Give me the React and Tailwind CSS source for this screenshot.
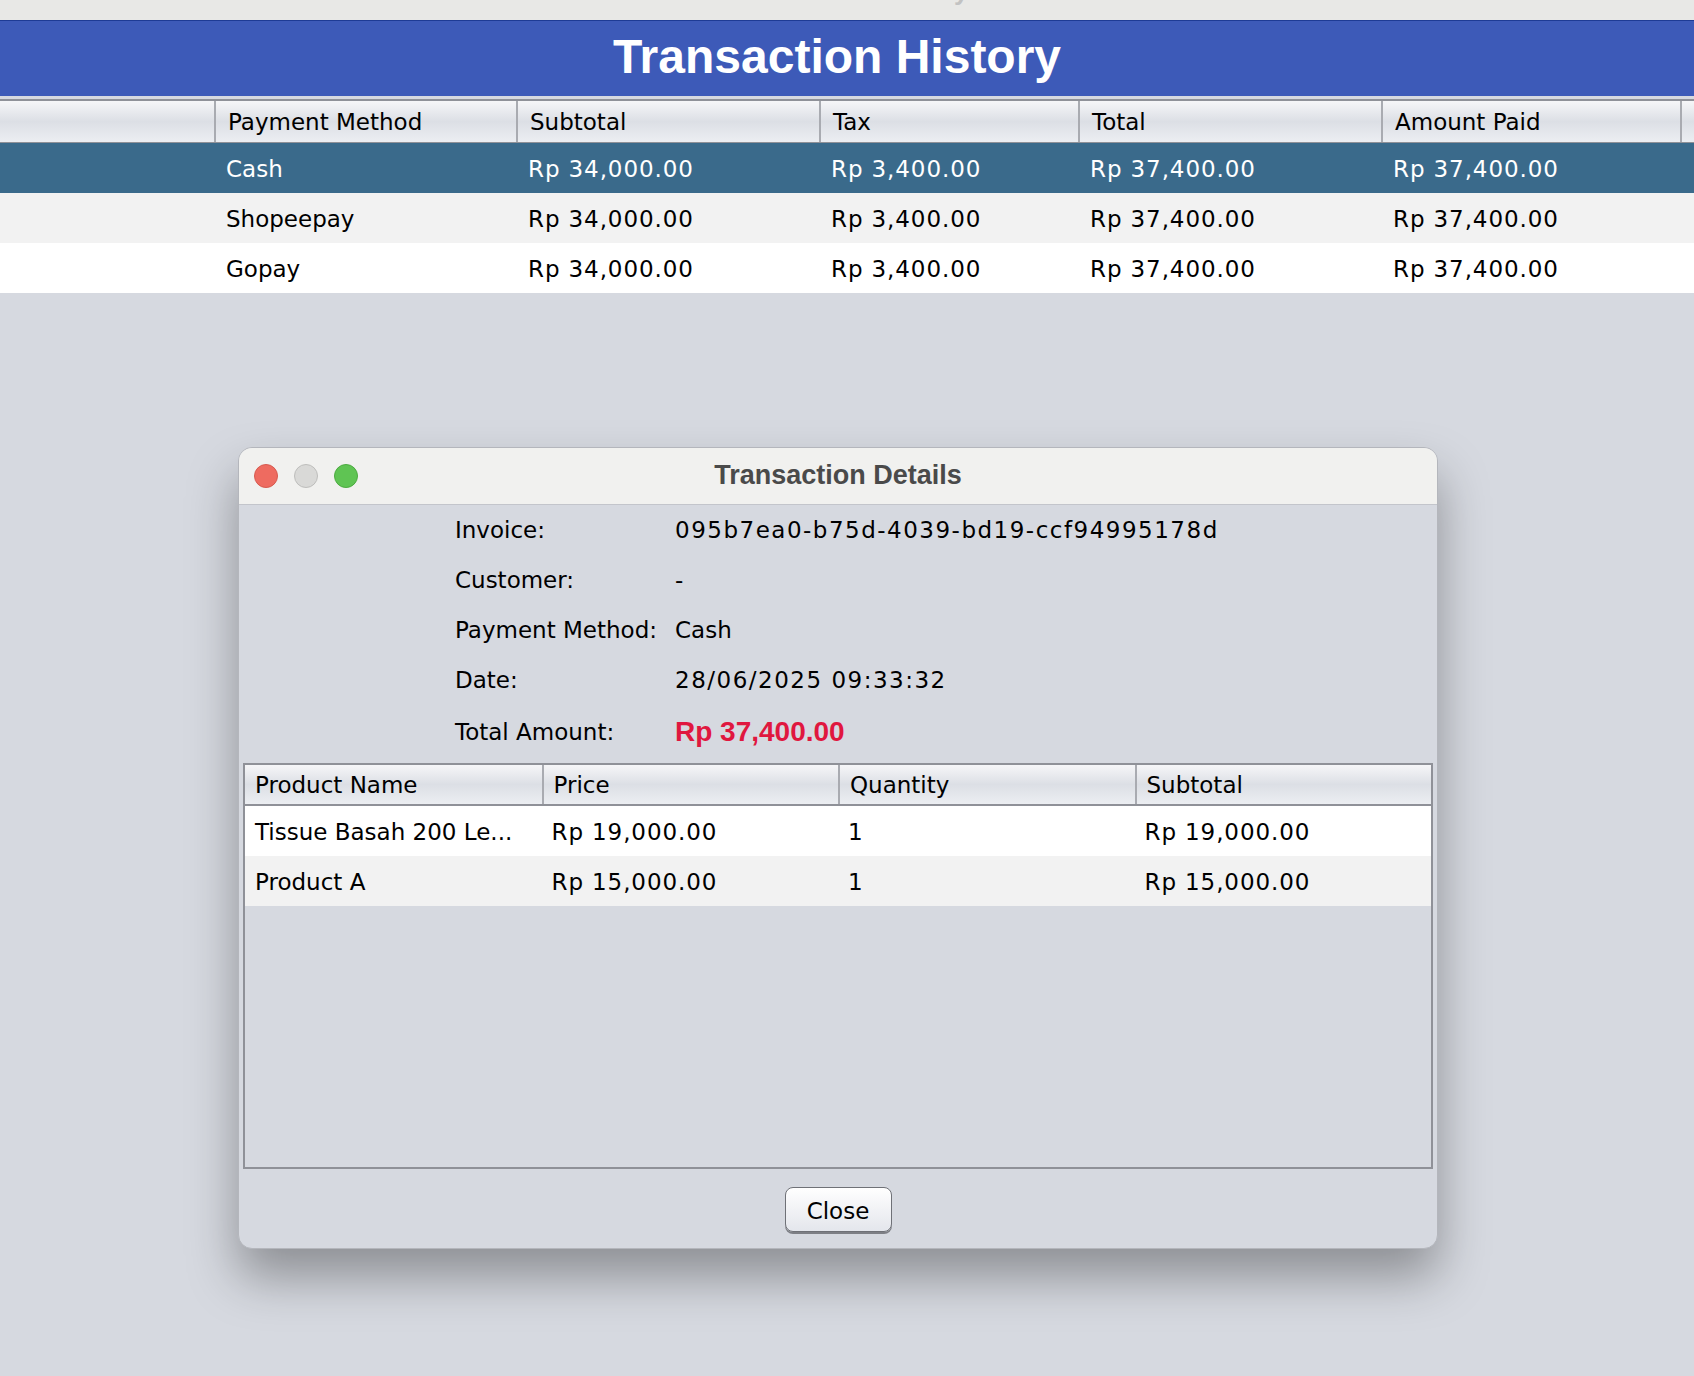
const topCols = ["", "Payment Method", "Subtotal", "Tax", "Total", "Amount Paid", "Change"];

const topRows = [
  ["", "Cash", "Rp 34,000.00", "Rp 3,400.00", "Rp 37,400.00", "Rp 37,400.00", ""],
  ["", "Shopeepay", "Rp 34,000.00", "Rp 3,400.00", "Rp 37,400.00", "Rp 37,400.00", ""],
  ["", "Gopay", "Rp 34,000.00", "Rp 3,400.00", "Rp 37,400.00", "Rp 37,400.00", ""],
];

const rowBg = ["bg-[#3a6a8b] text-white", "bg-[#f2f2f2] text-black", "bg-white text-black"];

const items = [
  ["Tissue Basah 200 Le...", "Rp 19,000.00", "1", "Rp 19,000.00"],
  ["Product A", "Rp 15,000.00", "1", "Rp 15,000.00"],
];

const gridTop = "grid grid-cols-[214px_302px_303px_259px_303px_299px_1fr]";

function InfoRow({ label, children, tall }) {
  return (
    <div className={`flex items-center pl-[216px] ${tall ? "h-[54px]" : "h-[50px]"}`}>
      <div className="w-[220px] text-[23px] text-black">{label}</div>
      <div>{children}</div>
    </div>
  );
}

export default function App() {
  return (
    <div className="w-[1694px] h-[1376px] overflow-hidden bg-[#d6d9e0] font-['DejaVu_Sans',sans-serif] flex flex-col">
      {/* window title strip */}
      <div className="h-[20px] bg-[#e8e8e6] overflow-hidden flex justify-center">
        <div className="mt-[-22px] leading-[26px] text-[26px] font-bold text-[#c2c2c2] font-['Liberation_Sans',Arial,sans-serif]">
          Transaction History
        </div>
      </div>

      {/* banner */}
      <div className="h-[76px] bg-[#3d5ab8] border-t border-[#1e3b95] flex items-center justify-center pb-[4px] pr-[20px]">
        <h1 className="text-[48px] font-bold text-white font-['Liberation_Sans',Arial,sans-serif] leading-none">
          Transaction History
        </h1>
      </div>
      <div className="h-[3px] bg-[#d6d9e0]" />

      {/* history table */}
      <div className={`${gridTop} h-[44px] border-t-2 border-b border-[#8f9198] bg-linear-to-b from-[#f6f6f8] via-[#dcdfe5] to-[#eceef2]`}>
        {topCols.map((c, i) => (
          <div
            key={i}
            className={`flex items-center overflow-hidden whitespace-nowrap pl-[12px] pt-[2px] text-[23px] text-black ${i > 0 ? "border-l-2 border-[#a9abb1]" : ""}`}
          >
            {c}
          </div>
        ))}
      </div>
      {topRows.map((r, ri) => (
        <div key={ri} className={`${gridTop} h-[50px] ${rowBg[ri]}`}>
          {r.map((c, i) => (
            <div
              key={i}
              className={`flex items-center overflow-hidden whitespace-nowrap pl-[12px] pt-[3px] text-[23px] ${i > 1 ? "tracking-[0.9px]" : ""}`}
            >
              {c}
            </div>
          ))}
        </div>
      ))}

      {/* dialog */}
      <div className="mt-[154px] ml-[238px] w-[1200px] h-[802px] rounded-[14px] border border-[#b4b6bc] bg-[#d6d9e0] shadow-[0_28px_50px_rgba(0,0,0,0.34)] overflow-hidden flex flex-col">
        <div className="h-[57px] shrink-0 bg-[#f1f1ef] border-b border-[#c3c5cb] grid grid-cols-[1fr_auto_1fr] items-center">
          <div className="flex items-center gap-[16px] pl-[15px]">
            <span className="w-[24px] h-[24px] rounded-full bg-[#ee6b60] border border-[#d65a4f]" />
            <span className="w-[24px] h-[24px] rounded-full bg-[#d9d9d7] border border-[#bebebc]" />
            <span className="w-[24px] h-[24px] rounded-full bg-[#5fc453] border border-[#4cab40]" />
          </div>
          <div className="text-[27px] font-bold text-[#4a4a4a] font-['Liberation_Sans',Arial,sans-serif] pb-[2px]">
            Transaction Details
          </div>
          <div />
        </div>

        <InfoRow label="Invoice:">
          <span className="text-[23px] tracking-[1.5px] text-black">095b7ea0-b75d-4039-bd19-ccf94995178d</span>
        </InfoRow>
        <InfoRow label="Customer:">
          <span className="text-[23px] text-black">-</span>
        </InfoRow>
        <InfoRow label="Payment Method:">
          <span className="text-[23px] text-black">Cash</span>
        </InfoRow>
        <InfoRow label="Date:">
          <span className="text-[23px] tracking-[1.5px] text-black">28/06/2025 09:33:32</span>
        </InfoRow>
        <InfoRow label="Total Amount:" tall>
          <span className="text-[28px] font-bold text-[#e0173f] font-['Liberation_Sans',Arial,sans-serif]">
            Rp 37,400.00
          </span>
        </InfoRow>

        {/* items table */}
        <div className="mt-[4px] ml-[4px] mr-[4px] h-[406px] border-2 border-[#8f9198] flex flex-col">
          <div className="grid grid-cols-4 h-[41px] border-b-2 border-[#8f9198] bg-linear-to-b from-[#f6f6f8] via-[#dcdfe5] to-[#eceef2]">
            {["Product Name", "Price", "Quantity", "Subtotal"].map((h, i) => (
              <div
                key={h}
                className={`flex items-center pl-[10px] pt-[2px] text-[23px] text-black ${i > 0 ? "border-l-2 border-[#a9abb1]" : ""}`}
              >
                {h}
              </div>
            ))}
          </div>
          {items.map((r, ri) => (
            <div key={ri} className={`grid grid-cols-4 h-[50px] ${ri === 0 ? "bg-white" : "bg-[#f2f2f2]"}`}>
              {r.map((c, i) => (
                <div
                  key={i}
                  className={`flex items-center pl-[10px] pt-[2px] whitespace-nowrap text-[23px] text-black ${i > 0 ? "tracking-[0.9px]" : ""}`}
                >
                  {c}
                </div>
              ))}
            </div>
          ))}
        </div>

        <div className="flex-1 flex justify-center pt-[18px]">
          <button className="w-[107px] h-[45px] rounded-[8px] border border-[#6f7177] bg-linear-to-b from-white to-[#e4e6ec] shadow-[0_2px_0_#7d7f85] pt-[3px] text-[23px] text-black">
            Close
          </button>
        </div>
      </div>
    </div>
  );
}
